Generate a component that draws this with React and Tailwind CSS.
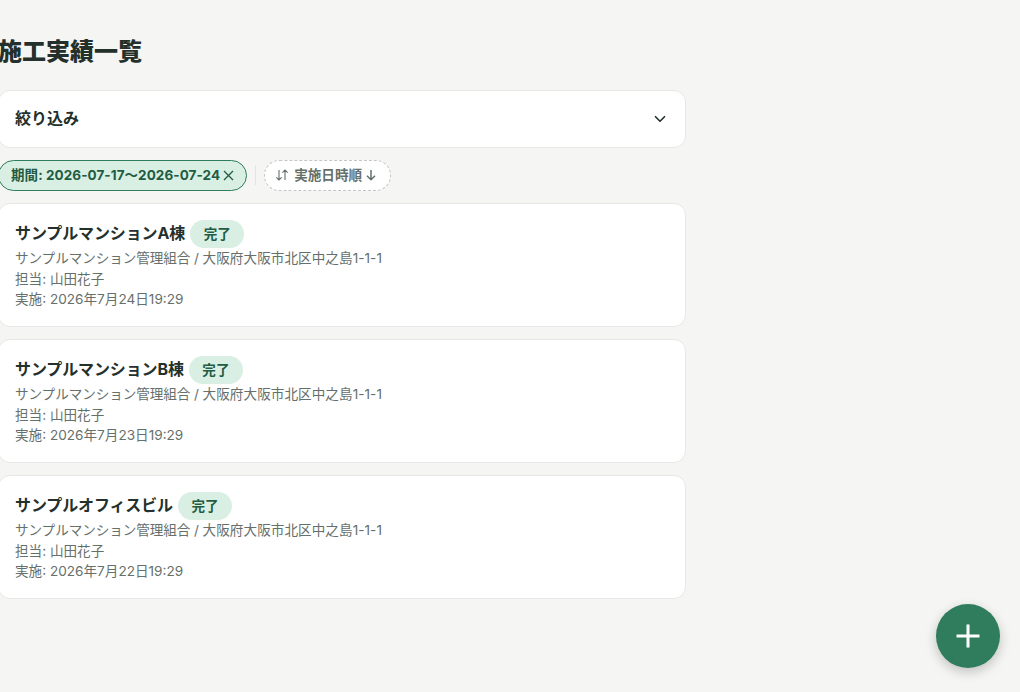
import { ChevronDown } from 'lucide-react';

const RECORDS = [
  { id: 1, name: 'サンプルマンションA棟', date: '2026年7月24日19:29' },
  { id: 2, name: 'サンプルマンションB棟', date: '2026年7月23日19:29' },
  { id: 3, name: 'サンプルオフィスビル', date: '2026年7月22日19:29' },
];

function SortIcon() {
  return (
    <svg viewBox="0 0 14 14" fill="none" stroke="currentColor" strokeWidth="1.1" className="h-3.5 w-3.5">
      <path d="M4 2v10M1.4 9.4 4 12l2.6-2.6M10 12V2M7.4 4.6 10 2l2.6 2.6" />
    </svg>
  );
}

function RecordCard({ record }) {
  return (
    <li className="h-[124px] rounded-xl border border-[#e7e8e6] bg-white px-4 pt-4">
      <div className="flex h-7 items-center gap-[5px]">
        <h2 className="-mt-0.5 text-base font-bold tracking-[-0.12px] text-[#24302b]">{record.name}</h2>
        <span className="flex h-7 items-center rounded-full bg-[#d9efe3] px-[13.5px] text-[13.6px] font-bold text-[#1f5c43]">完了</span>
      </div>
      <div className="text-[13.6px] leading-[20.5px] text-[#66706b]">
        <p><span className="tracking-[-0.08px]">サンプルマンション管理組合 / </span><span className="tracking-[0.05px]">大阪府大阪市北区中之島1-1-1</span></p>
        <p>担当: 山田花子</p>
        <p>実施: {record.date}</p>
      </div>
    </li>
  );
}

export default function App() {
  return (
    <div className="min-h-screen overflow-hidden bg-[#f5f5f3] font-['Inter','Noto_Sans_CJK_JP',sans-serif] text-[#24302b]">
      <main className="-ml-0.5 w-[688px] pt-[34px]">
        <h1 className="h-[55.5px] text-2xl leading-9 font-extrabold">施工実績一覧</h1>

        <button className="flex h-[58px] w-full items-center justify-between rounded-xl border border-[#e7e8e6] bg-white px-4">
          <span className="-mt-0.5 text-base font-bold">絞り込み</span>
          <ChevronDown className="h-[18px] w-[18px]" strokeWidth={2.2} />
        </button>

        {/* Active filters and sort order */}
        <div className="mt-[11.5px] flex h-8 items-center gap-2">
          <button className="flex h-[31px] items-center gap-[3px] rounded-full border border-[#2f7d5c] bg-[#d9efe3] px-3 text-[13.5px] font-bold tracking-[0.07px] whitespace-nowrap text-[#1f5c43]">
            期間: 2026-07-17〜2026-07-24
            <svg viewBox="0 0 11 11" fill="none" stroke="currentColor" strokeWidth="1.3" className="h-[11px] w-[11px]">
              <path d="M1 1l9 9M10 1l-9 9" />
            </svg>
          </button>
          <span className="h-5 w-px bg-[#e3e5e2]" />
          <button className="flex h-[31px] items-center rounded-full border border-dashed border-[#c3c7c4] bg-white pr-3.5 pl-2.5 text-[13.6px] font-semibold text-[#66706b]">
            <SortIcon />
            <span className="mr-1 ml-[5px]">実施日時順</span>
            <svg viewBox="0 0 10 12" fill="none" stroke="currentColor" strokeWidth="1.5" className="h-3 w-2.5">
              <path d="M5 1v9.6M1 6.8l4 4 4-4" />
            </svg>
          </button>
        </div>

        <ul className="mt-3 space-y-3">
          {RECORDS.map(r => <RecordCard key={r.id} record={r} />)}
        </ul>
      </main>

      <button className="fixed right-5 bottom-6 flex h-16 w-16 items-center justify-center rounded-full bg-[#2f7d5c] text-white shadow-[0_4px_12px_rgba(0,0,0,0.22)]">
        <svg viewBox="0 0 24 24" fill="none" stroke="currentColor" strokeWidth="3" className="h-6 w-6">
          <path d="M12 .5v23M.5 12h23" />
        </svg>
      </button>
    </div>
  );
}
